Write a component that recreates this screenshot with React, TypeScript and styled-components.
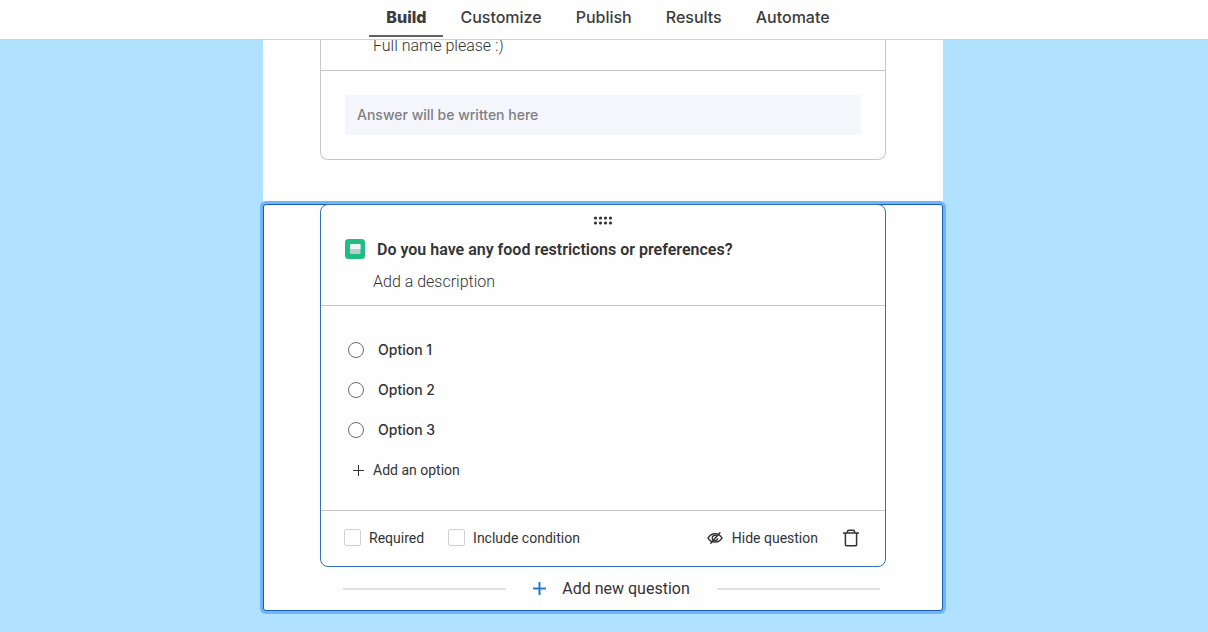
import React from "react";
import styled, { createGlobalStyle } from "styled-components";

const GlobalStyle = createGlobalStyle`
  *, *::before, *::after { box-sizing: border-box; }
  body {
    margin: 0;
    min-height: 100vh;
    background: #b0e2ff;
    color: #333336;
    font-family: Roboto, "Liberation Sans", sans-serif;
    font-size: 14px;
  }
  button, input { font: inherit; color: inherit; }
`;

const TopBar = styled.header`
  position: sticky;
  top: 0;
  z-index: 2;
  display: flex;
  justify-content: center;
  height: 40px;
  padding-left: 8px;
  background: #fefefe;
  border-bottom: 1px solid #cfd1d6;
`;

const Tabs = styled.nav`
  display: flex;
`;

const Tab = styled.a<{ $active?: boolean }>`
  height: 37px;
  padding: 0 17px;
  border-bottom: 2px solid ${(p) => (p.$active ? "#636366" : "transparent")};
  font-family: Inter, "Liberation Sans", sans-serif;
  font-size: 16px;
  font-weight: ${(p) => (p.$active ? 800 : 500)};
  line-height: 34px;
  color: #3c3c40;
  text-decoration: none;
`;

const Page = styled.main`
  display: flex;
  justify-content: center;
  margin-top: -4px;
  padding-right: 2px;
`;

const FormSheet = styled.div`
  flex: 0 1 680px;
  min-width: 0;
  background: #fefefe;
`;

const Slot = styled.section<{ $selected?: boolean }>`
  padding: 0 57px;
  ${(p) =>
    p.$selected
      ? "border-radius: 3px; box-shadow: 0 0 0 3px #70b4fa, inset 0 0 0 1px #165fb0;"
      : "padding-bottom: 44px;"}
`;

const Card = styled.article<{ $selected?: boolean }>`
  border: 1px solid ${(p) => (p.$selected ? "#2f74b9" : "#c6c7cb")};
  border-top-width: ${(p) => (p.$selected ? "1px" : "0")};
  border-radius: ${(p) => (p.$selected ? "8px" : "0 0 8px 8px")};
`;

const CardHead = styled.div`
  padding: 0 24px 14px;
  border-bottom: 1px solid #c3c4c8;
`;

const Description = styled.p`
  margin: 0;
  padding-left: 28px;
  font-size: 16px;
  font-weight: 300;
  line-height: 20px;
`;

const DescriptionField = styled.input`
  display: block;
  width: 100%;
  height: 20px;
  margin-top: 10px;
  padding: 0 0 0 28px;
  border: 0;
  background: transparent;
  font-size: 16px;
  font-weight: 300;
  &::placeholder { color: #333336; opacity: 1; }
`;

const AnswerArea = styled.div`
  padding: 24px;
`;

const AnswerField = styled.input`
  display: block;
  width: 100%;
  height: 40px;
  padding: 0 12px 2px;
  border: 0;
  background: #f5f6fb;
  font-family: Inter, "Liberation Sans", sans-serif;
  font-size: 14px;
  font-weight: 500;
  &::placeholder { color: #808084; opacity: 1; }
`;

const Grip = styled.button`
  display: block;
  margin: 0 auto;
  padding: 11px 0 12px;
  border: 0;
  background: transparent;
  svg { display: block; }
`;

const TitleRow = styled.div`
  display: flex;
  align-items: center;
  gap: 12px;
`;

const Title = styled.h2`
  margin: 0;
  padding-top: 2px;
  font-size: 16px;
  font-weight: 600;
  line-height: 22px;
`;

const Options = styled.div`
  padding: 24px 24px 20px;
`;

const OptionRow = styled.label`
  display: flex;
  align-items: center;
  gap: 14px;
  height: 40px;
  padding-left: 3px;
  font-family: Inter, "Liberation Sans", sans-serif;
  font-weight: 500;
`;

const OptionText = styled.span`
  padding-bottom: 2px;
`;

const Radio = styled.input`
  appearance: none;
  width: 16px;
  height: 16px;
  margin: 0;
  border: 1px solid #69696d;
  border-radius: 50%;
`;

const PlainButton = styled.button`
  display: flex;
  align-items: center;
  gap: 9px;
  padding: 0;
  border: 0;
  background: transparent;
`;

const AddOption = styled(PlainButton)`
  height: 40px;
  padding-left: 8px;
`;

const CardFoot = styled.footer`
  display: flex;
  align-items: center;
  gap: 24px;
  height: 56px;
  padding: 0 25px 2px 23px;
  border-top: 1px solid #c3c4c8;
`;

const CheckLabel = styled.label`
  display: flex;
  align-items: center;
  gap: 8px;
`;

const Checkbox = styled.input`
  appearance: none;
  width: 17px;
  height: 17px;
  margin: 0;
  border: 1px solid #d0d0d7;
  border-radius: 2px;
`;

const FootActions = styled.div`
  display: flex;
  gap: 24px;
  margin-left: auto;
`;

const AddRow = styled.div`
  display: flex;
  align-items: center;
  gap: 27px;
  height: 44px;
  padding: 0 6px 1px 23px;
`;

const Rule = styled.span`
  flex: 1;
  height: 2px;
  background: #e0e0e6;
`;

const AddQuestion = styled(PlainButton)`
  gap: 16px;
  font-size: 16px;
`;

const GripIcon = () => (
  <svg width="20" height="9" viewBox="0 0 20 9" fill="#333336" aria-hidden="true">
    {[2, 7, 12, 17].map((x) => (
      <React.Fragment key={x}>
        <circle cx={x + 0.5} cy="2" r="1.6" />
        <circle cx={x + 0.5} cy="7" r="1.6" />
      </React.Fragment>
    ))}
  </svg>
);

const ChoiceIcon = () => (
  <svg width="20" height="20" viewBox="0 0 20 20" aria-hidden="true">
    <rect width="20" height="20" rx="3.5" fill="#20bd83" />
    <rect x="5" y="5" width="10.5" height="10" rx="1" fill="#b8ccd1" />
    <path d="M6 5h8.5a1 1 0 0 1 1 1v4H5V6a1 1 0 0 1 1-1z" fill="#eef3f8" />
  </svg>
);

const PlusIcon = ({ size, color, weight }: { size: number; color: string; weight: number }) => (
  <svg width={size} height={size} viewBox={`0 0 ${size} ${size}`} stroke={color} strokeWidth={weight} aria-hidden="true">
    <path d={`M${size / 2} 0V${size}M0 ${size / 2}H${size}`} />
  </svg>
);

const HideIcon = () => (
  <svg width="16" height="14" viewBox="0 0 16 14" fill="none" stroke="#333336" strokeWidth="1.4" strokeLinecap="round" aria-hidden="true">
    <path d="M1 7.2C4.2 1.3 11.8 1.3 15 7.2C11.8 12.4 4.2 12.4 1 7.2z" />
    <path d="M9.2 4.6A2.7 2.7 0 1 0 10.6 7.6" />
    <path d="M12.9 1.8L3.8 12.2" />
  </svg>
);

const TrashIcon = () => (
  <svg width="18" height="18" viewBox="0 0 18 18" fill="none" stroke="#333336" strokeWidth="1.5" aria-hidden="true">
    <path d="M1 4h16M5.5 4V2.5a1.2 1.2 0 0 1 1.2-1.2h4.6a1.2 1.2 0 0 1 1.2 1.2V4M3.4 4v11.6a1.2 1.2 0 0 0 1.2 1.2h8.8a1.2 1.2 0 0 0 1.2-1.2V4" />
  </svg>
);

const tabs = ["Build", "Customize", "Publish", "Results", "Automate"];
const options = ["Option 1", "Option 2", "Option 3"];

export default function App() {
  return (
    <>
      <GlobalStyle />
      <TopBar>
        <Tabs>
          {tabs.map((tab, i) => (
            <Tab key={tab} href={`#${tab.toLowerCase()}`} $active={i === 0}>
              {tab}
            </Tab>
          ))}
        </Tabs>
      </TopBar>
      <Page>
        <FormSheet>
          <Slot>
            <Card>
              <CardHead>
                <Description>Full name please :)</Description>
              </CardHead>
              <AnswerArea>
                <AnswerField aria-label="Answer" placeholder="Answer will be written here" readOnly />
              </AnswerArea>
            </Card>
          </Slot>
          <Slot $selected>
            <Card $selected>
              <CardHead>
                <Grip type="button" aria-label="Move question">
                  <GripIcon />
                </Grip>
                <TitleRow>
                  <ChoiceIcon />
                  <Title>Do you have any food restrictions or preferences?</Title>
                </TitleRow>
                <DescriptionField aria-label="Description" placeholder="Add a description" />
              </CardHead>
              <Options>
                {options.map((option) => (
                  <OptionRow key={option}>
                    <Radio type="radio" name="food" />
                    <OptionText>{option}</OptionText>
                  </OptionRow>
                ))}
                <AddOption type="button">
                  <PlusIcon size={11} color="#333336" weight={1} />
                  Add an option
                </AddOption>
              </Options>
              <CardFoot>
                <CheckLabel>
                  <Checkbox type="checkbox" />
                  Required
                </CheckLabel>
                <CheckLabel>
                  <Checkbox type="checkbox" />
                  Include condition
                </CheckLabel>
                <FootActions>
                  <PlainButton type="button">
                    <HideIcon />
                    Hide question
                  </PlainButton>
                  <PlainButton type="button" aria-label="Delete question">
                    <TrashIcon />
                  </PlainButton>
                </FootActions>
              </CardFoot>
            </Card>
            <AddRow>
              <Rule />
              <AddQuestion type="button">
                <PlusIcon size={13} color="#2878d0" weight={2} />
                Add new question
              </AddQuestion>
              <Rule />
            </AddRow>
          </Slot>
        </FormSheet>
      </Page>
    </>
  );
}
